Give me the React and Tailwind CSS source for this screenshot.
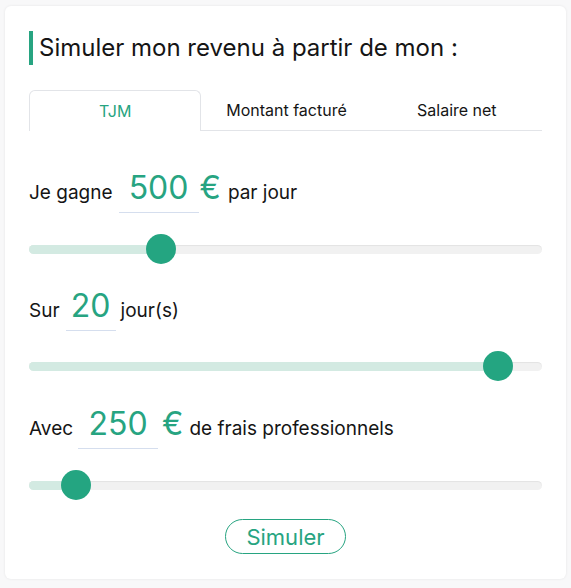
import React from 'react';

const Slider = ({ pct }) => {
  // thumb centre moves inside the track, inset by the thumb radius
  const left = `calc(15px + ${pct} * (100% - 30px))`;
  return (
    <div className="relative h-[30px] flex items-center">
      <div className="relative w-full h-[9px] rounded-full bg-[#f1f1f1] shadow-[inset_0_1px_1px_rgba(0,0,0,0.06)] overflow-hidden">
        <div className="absolute left-0 top-0 h-full bg-[#d3eae2]" style={{ width: left }} />
      </div>
      <div
        className="absolute top-0 w-[30px] h-[30px] -ml-[15px] rounded-full bg-[#24a581]"
        style={{ left }}
      />
    </div>
  );
};

const ValueInput = ({ value, width }) => (
  <span
    className={`inline-block text-center text-[32px] leading-[36px] text-[#27a481] border-b border-[#d5deee] pb-[6px] ${width}`}
  >
    {value}
  </span>
);

export default function App() {
  const tabs = ['TJM', 'Montant facturé', 'Salaire net'];

  return (
    <div className="min-h-screen bg-[#f8f8f9] pt-[6px] pl-[5px] font-['Inter','Noto_Sans',sans-serif] text-[#151515]">
      <div className="w-[561px] h-[573px] bg-white rounded-md shadow-[0_0_3px_rgba(0,0,0,0.08)] px-6 pt-[25px]">
        <div className="flex items-center h-[34px]">
          <div className="w-[4px] h-[34px] bg-[#27a481]" />
          <h1 className="ml-[6px] text-[24px] leading-none">Simuler mon revenu à partir de mon :</h1>
        </div>

        <div className="mt-[25px] flex h-[41px]">
          {tabs.map((t, i) => (
            <div
              key={t}
              className={`flex-1 flex items-center justify-center text-[16px] ${
                i === 0
                  ? 'border border-b-0 border-[#e2e4e8] rounded-t-md text-[#27a481]'
                  : 'border-b border-[#e2e4e8]'
              }`}
            >
              {t}
            </div>
          ))}
        </div>

        <div className="mt-[39px] flex items-baseline text-[19px]">
          <span>Je gagne</span>
          <span className="ml-[6px]"><ValueInput value="500" width="w-[80px]" /></span>
          <span className="text-[32px] leading-[36px] text-[#27a481] ml-[1px]">€</span>
          <span className="ml-[7px]">par jour</span>
        </div>
        <div className="mt-[21px]">
          <Slider pct={0.243} />
        </div>

        <div className="mt-[24px] flex items-baseline text-[19px]">
          <span>Sur</span>
          <span className="ml-[6px]"><ValueInput value="20" width="w-[50px]" /></span>
          <span className="ml-[5px]">jour(s)</span>
        </div>
        <div className="mt-[20px]">
          <Slider pct={0.94} />
        </div>

        <div className="mt-[25px] flex items-baseline text-[19px]">
          <span>Avec</span>
          <span className="ml-[5px]"><ValueInput value="250" width="w-[80px]" /></span>
          <span className="text-[32px] leading-[36px] text-[#27a481] ml-[4px]">€</span>
          <span className="ml-[6px]">de frais professionnels</span>
        </div>
        <div className="mt-[21px]">
          <Slider pct={0.066} />
        </div>

        <div className="mt-[19px] flex justify-center">
          <button className="w-[121px] h-[35px] rounded-full border border-[#27a481] text-[22px] leading-none text-[#27a481] bg-white">
            Simuler
          </button>
        </div>
      </div>
    </div>
  );
}
